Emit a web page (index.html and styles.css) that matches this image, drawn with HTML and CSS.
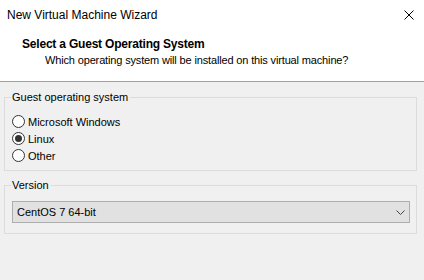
FILE: index.html
```html
<!DOCTYPE html>
<html lang="en">
<head>
    <meta charset="UTF-8">
    <title>New Virtual Machine Wizard</title>
    <link rel="stylesheet" href="styles.css">
</head>
<body>

    <div class="window">
        <div class="header">
            <div class="titlebar">
                <span class="title">New Virtual Machine Wizard</span>
                <svg class="close" width="10" height="10" viewBox="0 0 10 10">
                    <path d="M0.5 0.5 L9.5 9.5 M9.5 0.5 L0.5 9.5" stroke="#000" stroke-width="1" fill="none"/>
                </svg>
            </div>
            <h1>Select a Guest Operating System</h1>
            <p class="subtitle">Which operating system will be installed on this virtual machine?</p>
        </div>

        <div class="content">
            <fieldset class="group">
                <legend>Guest operating system</legend>
                <label class="radio"><span class="dot"></span>Microsoft Windows</label>
                <label class="radio"><span class="dot checked"></span>Linux</label>
                <label class="radio"><span class="dot"></span>Other</label>
            </fieldset>

            <fieldset class="group version">
                <legend>Version</legend>
                <div class="select">
                    <span>CentOS 7 64-bit</span>
                    <svg class="chevron" width="9" height="5" viewBox="0 0 9 5">
                        <path d="M0.5 0.5 L4.5 4.5 L8.5 0.5" stroke="#444" stroke-width="1" fill="none"/>
                    </svg>
                </div>
            </fieldset>
        </div>
    </div>

</body>
</html>
```

FILE: styles.css
```css
body {
    margin: 0;
    padding: 0;
    font-family: 'Liberation Sans', Arial, sans-serif;
    font-size: 11px;
    color: #000;
    background-color: #f0f0f0;
}

.window {
    width: 424px;
    height: 280px;
    background-color: #f0f0f0;
    overflow: hidden;
}

.header {
    background-color: #ffffff;
    height: 81px;
    border-bottom: 1px solid #a0a0a0;
}

.titlebar {
    display: flex;
    justify-content: space-between;
    align-items: center;
    height: 30px;
    padding: 0 10px 0 7px;
}

.title {
    font-size: 12px;
}

h1 {
    font-size: 12px;
    font-weight: bold;
    letter-spacing: -0.2px;
    margin: 6px 0 0 22px;
    line-height: 16px;
}

.subtitle {
    margin: 0 0 0 45px;
    line-height: 16px;
    letter-spacing: -0.15px;
}

.content {
    padding: 7px 7px 0 4px;
}

.group {
    margin: 0;
    padding: 8px 6px 6px 7px;
    border: 1px solid #dcdcdc;
    min-width: 0;
}

.group legend {
    padding: 0 2px 0 1px;
    margin-left: -1px;
    line-height: 16px;
}

.version {
    margin-top: 6px;
    padding-bottom: 10px;
}

.radio {
    display: flex;
    align-items: center;
    height: 17px;
}

.dot {
    width: 11px;
    height: 11px;
    border: 1px solid #333;
    border-radius: 50%;
    background: #fff;
    margin-right: 3px;
    position: relative;
}

.dot.checked::after {
    content: "";
    position: absolute;
    left: 2px;
    top: 2px;
    width: 7px;
    height: 7px;
    border-radius: 50%;
    background: #333;
}

.select {
    display: flex;
    justify-content: space-between;
    align-items: center;
    height: 20px;
    padding: 0 4px 0 4px;
    border: 1px solid #adadad;
    background-color: #e1e1e1;
}
```
